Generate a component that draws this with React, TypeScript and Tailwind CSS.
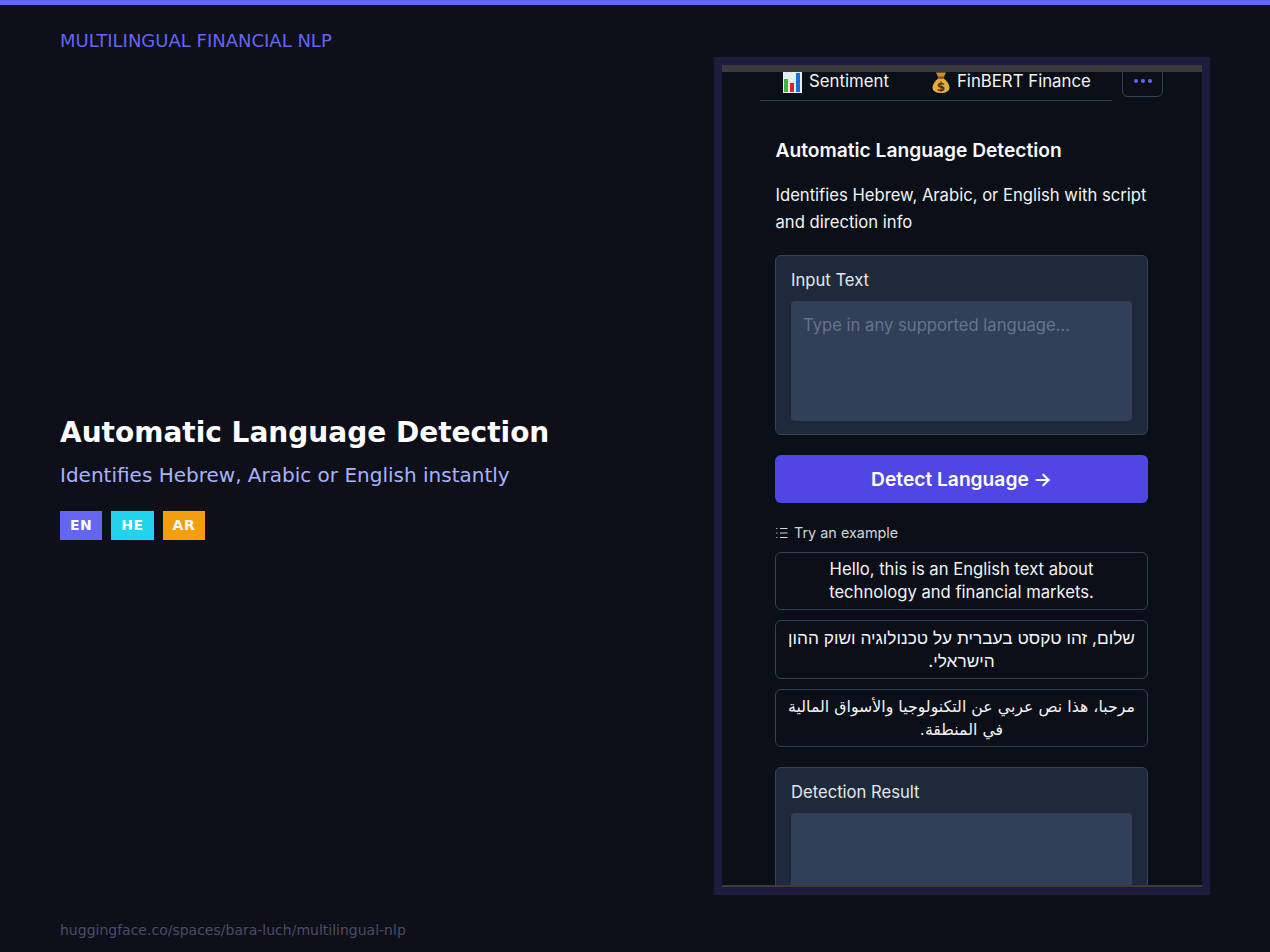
const examples = [
  { text: 'Hello, this is an English text about technology and financial markets.', cls: 'pt-[1px] text-[16.64px]', dir: 'ltr' as const },
  { text: 'שלום, זהו טקסט בעברית על טכנולוגיה ושוק ההון הישראלי.', cls: 'text-[17.3px]', dir: 'rtl' as const },
  { text: 'مرحبا، هذا نص عربي عن التكنولوجيا والأسواق المالية في المنطقة.', cls: "font-['DejaVu_Sans',sans-serif] text-[15.8px]", dir: 'rtl' as const },
]

const badges = [
  { label: 'EN', color: 'bg-[#6366f1]' },
  { label: 'HE', color: 'bg-[#22d3ee]' },
  { label: 'AR', color: 'bg-[#f59e0b]' },
]

const dejavu = "font-['DejaVu_Sans',sans-serif]"
const inter = "font-['Inter','Liberation_Sans',sans-serif]"

function ListIcon() {
  return (
    <svg width="14" height="14" viewBox="0 0 14 14" fill="none" stroke="#d1d5db" strokeWidth="1">
      <path d="M5 2.500h7.500M5 7h7.500M5 11.500h7.500" />
      <path d="M1 2.500h1.500M1 7h1.500M1 11.500h1.500" stroke="#9ca3af" />
    </svg>
  )
}

function ChartEmoji() {
  return (
    <svg width="20" height="22" viewBox="0 0 20 22" className="shrink-0">
      <rect x="1" y="0" width="19" height="21" fill="#e8edf2" />
      <rect x="2" y="7" width="4" height="13" fill="#3fb24a" />
      <rect x="8" y="11" width="4" height="9" fill="#d8281e" />
      <rect x="14" y="1" width="4" height="19" fill="#1c6fd6" />
    </svg>
  )
}

function BagEmoji() {
  return (
    <svg width="20" height="22" viewBox="0 0 20 22" className="shrink-0">
      <path d="M5 0.500h10l-2.400 5h-5.200z" fill="#c98f2e" />
      <rect x="6.600" y="4.500" width="6.800" height="2" rx="1" fill="#7a5316" />
      <path d="M7.200 6.500h5.600c3.200 2.600 5.700 6 5.700 9 0 3.600-3.500 5.500-8.500 5.500s-8.500-1.900-8.500-5.500c0-3 2.500-6.400 5.700-9z" fill="#e3ad41" />
      <text x="10" y="18.500" textAnchor="middle" fontSize="12" fontWeight="700" fill="#4a3208" fontFamily="'DejaVu Sans', sans-serif">$</text>
    </svg>
  )
}

function Panel() {
  return (
    <div className={`h-[838px] w-[496px] border-8 border-[#1e1b3f] bg-[#0b0f17] ${inter}`}>
      <div className="flex h-full flex-col overflow-hidden border-t-[7px] border-b-2 border-t-[#3a3a3c] border-b-[#3f3a36]">
        <div className="mt-[-9px] flex items-start pl-[38px]">
          <div className="flex h-[38px] w-[352px] border-b border-[#374151] pl-[22px] text-[16.8px] leading-[20px] text-[#f3f4f6]">
            <span className="flex items-start gap-[7px]"><span className="mt-[9px] flex"><ChartEmoji /></span><span className="mt-[8px]">Sentiment</span></span>
            <span className="ml-[42px] flex items-start gap-[6px]"><span className="mt-[9px] flex"><BagEmoji /></span><span className="mt-[8px]">FinBERT Finance</span></span>
          </div>
          <div className="ml-[10px] flex h-[34px] w-[41px] items-center justify-center gap-[3px] rounded-md border border-[#374151] pt-[1px]">
            <span className="h-1 w-1 rounded-full bg-[#6366f1]" />
            <span className="h-1 w-1 rounded-full bg-[#6366f1]" />
            <span className="h-1 w-1 rounded-full bg-[#6366f1]" />
          </div>
        </div>

        <div className="ml-[53px] mr-[54px] flex flex-col pt-[36px]">
          <h2 className="pl-[0.5px] text-[19.2px] leading-[27px] font-semibold text-[#f9fafb]">Automatic Language Detection</h2>
          <p className="mt-[18px] pl-[0.5px] text-[16.64px] leading-[27px] text-[#f3f4f6]">
            Identifies Hebrew, Arabic, or English with script and direction info
          </p>

          <div className="mt-[19px] h-[180px] rounded-md border border-[#334155] bg-[#1e293b] px-[15px] pt-[14px]">
            <div className="text-[16.64px] leading-[20px] text-[#e5e7eb]">Input Text</div>
            <div className="mt-[11px] h-[120px] rounded bg-[#323f58] px-3 pt-[14px] text-[16.64px] leading-[20px] text-[#64748b]">
              Type in any supported language...
            </div>
          </div>

          <button className="mt-5 h-[48px] rounded-md bg-[#4f46e5] text-[19.2px] font-semibold text-white">
            Detect Language →
          </button>

          <div className="mt-[20px] flex items-center gap-[5px] text-[14.4px] leading-[20px] text-[#d1d5db]">
            <ListIcon />
            Try an example
          </div>

          <div className="mt-[8.5px] flex flex-col gap-[10px]">
            {examples.map(ex => (
              <button
                key={ex.text}
                dir={ex.dir}
                className={`flex h-[58.5px] items-center justify-center rounded-md border border-[#334155] px-[11px] text-center leading-[23px] text-[#f3f4f6] ${ex.cls}`}
              >
                {ex.text}
              </button>
            ))}
          </div>

          <div className="mt-5 h-[180px] rounded-md border border-[#334155] bg-[#1e293b] px-[15px] pt-[14px]">
            <div className="text-[16.64px] leading-[20px] text-[#e5e7eb]">Detection Result</div>
            <div className="mt-[11px] h-[120px] rounded bg-[#323f58]" />
          </div>
        </div>
      </div>
    </div>
  )
}

export default function App() {
  return (
    <div className={`flex h-[952px] flex-col bg-[#0f0f1a] ${dejavu}`}>
      <div className="h-[5px] bg-[#6366f1]" />
      <div className="flex flex-1 justify-between pl-[60px] pr-[60px]">
        <div className="flex w-[600px] flex-col">
          <div className="pt-[26px] text-[18px] leading-[20px] text-[#6366f1]">MULTILINGUAL FINANCIAL NLP</div>
          <div className="mt-[365px]">
            <h1 className="text-[28px] leading-[34px] font-bold text-white">Automatic Language Detection</h1>
            <p className="mt-[13px] text-[20px] leading-[24px] text-[#a5b4fc]">Identifies Hebrew, Arabic or English instantly</p>
            <div className="mt-[24px] flex gap-[9px]">
              {badges.map(b => (
                <span key={b.label} className={`flex h-[29px] items-center px-[10px] text-[14px] font-bold tracking-[0.5px] text-white ${b.color}`}>
                  {b.label}
                </span>
              ))}
            </div>
          </div>
          <div className="mt-auto pb-[14px] text-[14px] leading-[16px] text-[#4b4b6b]">huggingface.co/spaces/bara-luch/multilingual-nlp</div>
        </div>
        <div className="pt-[52px]">
          <Panel />
        </div>
      </div>
    </div>
  )
}
